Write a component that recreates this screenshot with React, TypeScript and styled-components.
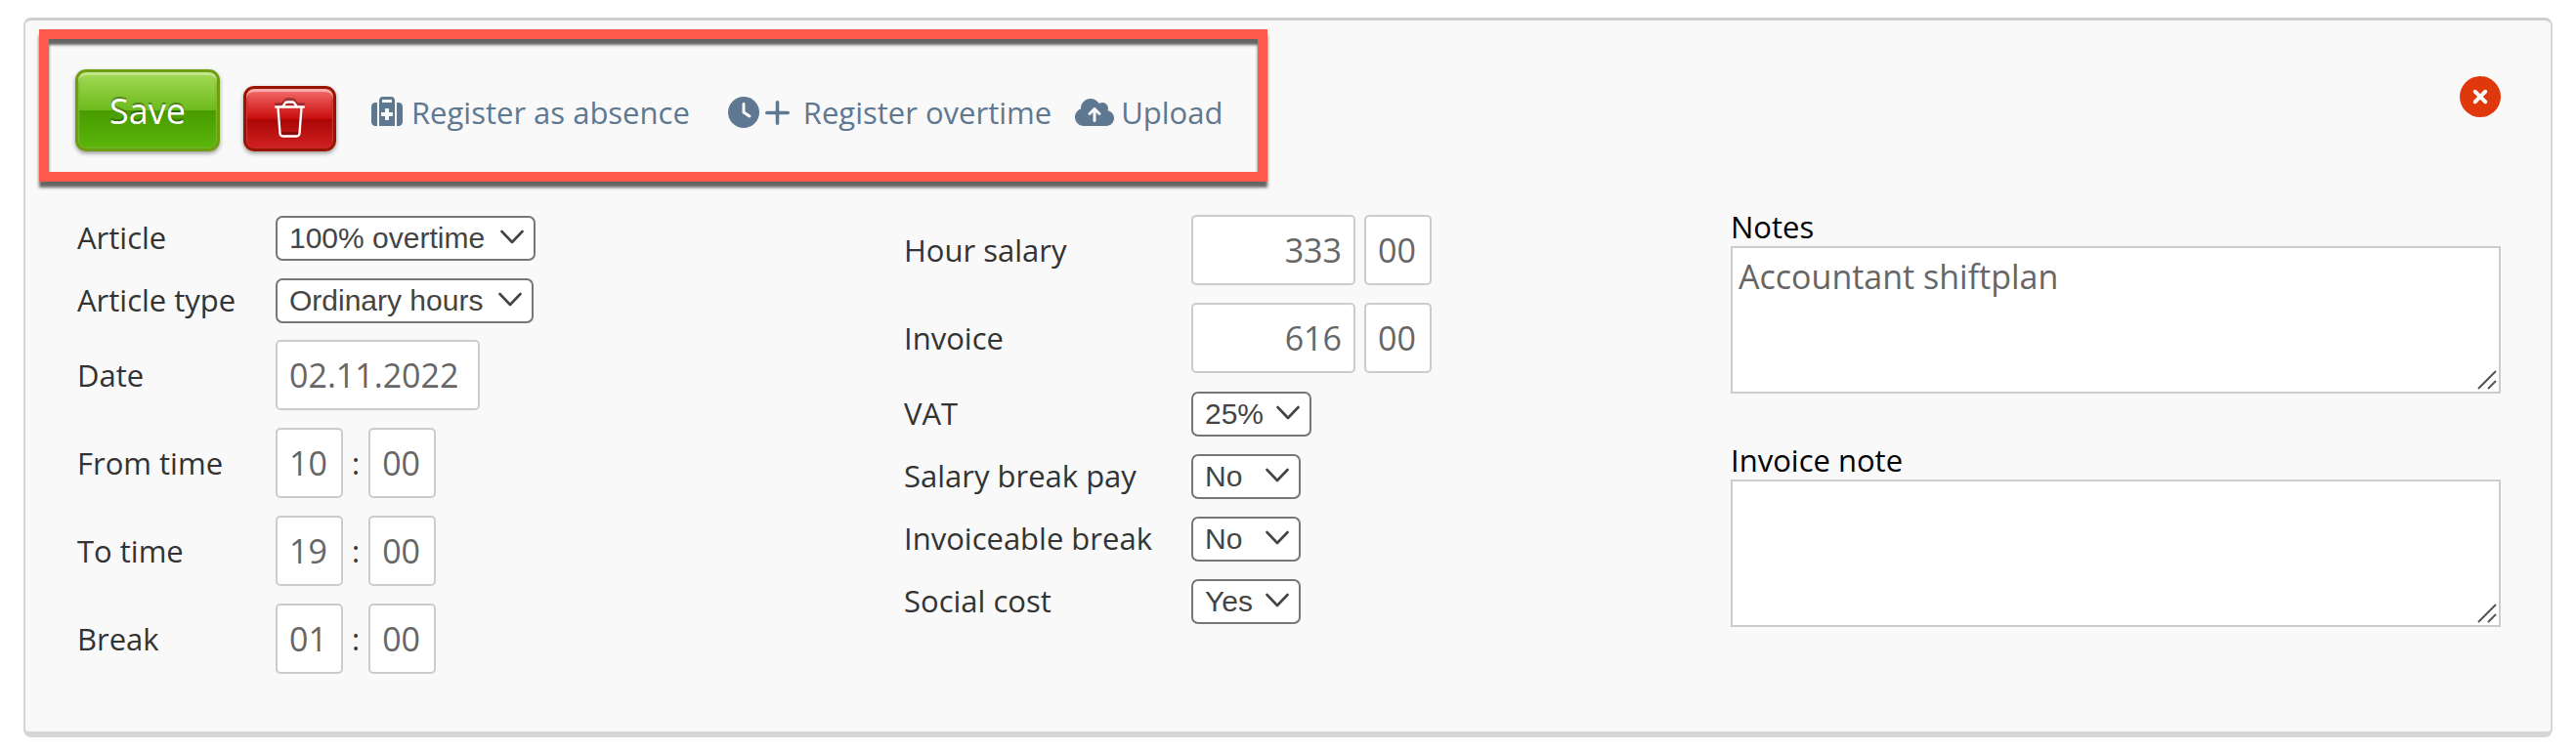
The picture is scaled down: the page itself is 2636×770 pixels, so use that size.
import React from 'react';
import styled, { createGlobalStyle } from 'styled-components';
import { FaSuitcaseMedical, FaClock, FaCloudArrowUp, FaCircleXmark } from 'react-icons/fa6';

const GlobalStyle = createGlobalStyle`
  *, *::before, *::after { box-sizing: border-box; }
  body {
    margin: 0;
    background: #fff;
    color: #333;
    font-family: 'Open Sans', 'Noto Sans', sans-serif;
    font-size: 31px;
    line-height: 44px;
  }
`;

const Page = styled.main`
  padding: 18px 24px 16px;
`;

const Card = styled.form`
  background: #f9f9f9;
  border: 2px solid #d6d6d6;
  border-top: 3px solid #cecece;
  border-bottom: 6px solid #d6d6d6;
  border-radius: 8px;
  padding: 9px 14px 59px;
`;

const Header = styled.header`
  display: flex;
  justify-content: space-between;
  align-items: flex-start;
`;

const Toolbar = styled.div`
  display: flex;
  align-items: flex-end;
  height: 156px;
  padding: 0 36px 21px 27px;
  border: 10px solid #ff5a4c;
  box-shadow: 0 6px 3px rgba(0, 0, 0, 0.6), inset 0 6px 3px rgba(0, 0, 0, 0.6);
`;

const palettes = {
  green: {
    border: '#6f9d12',
    fill: 'linear-gradient(#a8dc5c 0%, #6dbb1c 50%, #489b00 50%, #5db80b 100%)',
    glow: '#c4e88e',
    edge: '#74b62b',
  },
  red: {
    border: '#991500',
    fill: 'linear-gradient(#f97777 0%, #c90d0d 50%, #a90505 50%, #d42424 100%)',
    glow: '#fbacac',
    edge: '#c62a2a',
  },
};

const GlossyButton = styled.button<{ $tone: 'green' | 'red' }>`
  display: flex;
  align-items: center;
  justify-content: center;
  padding: ${p => (p.$tone === 'green' ? '16px 32px 14px' : '12px 29px 11px')};
  border: 3px solid ${p => palettes[p.$tone].border};
  border-radius: 11px;
  background: ${p => palettes[p.$tone].fill};
  background-origin: border-box;
  box-shadow: inset 0 3px 1px ${p => palettes[p.$tone].glow}, inset 0 0 2px 1px ${p => palettes[p.$tone].edge},
    0 2px 4px rgba(0, 0, 0, 0.4);
  color: #fff;
  font: 36px/48px 'Open Sans', 'Noto Sans', sans-serif;
  text-shadow: 0 -2px 1px rgba(0, 0, 0, 0.35);
  cursor: pointer;

  svg {
    display: block;
    filter: drop-shadow(0 -3px 0 rgba(0, 0, 0, 0.3));
  }
`;

const ActionLink = styled.a<{ $start: number; $gap: number }>`
  display: flex;
  align-items: center;
  gap: ${p => p.$gap}px;
  margin-left: ${p => p.$start}px;
  color: #5e7892;
  text-decoration: none;
  white-space: nowrap;

  svg { flex: none; }
`;

const IconPair = styled.span`
  display: flex;
  align-items: center;
  gap: 6px;
`;

const UploadIcon = styled(FaCloudArrowUp)`
  width: 40px;
  height: 32px;
`;

const ToolButtons = styled.div`
  display: flex;
  align-items: flex-end;
  gap: 24px;
`;

const ToolLinks = styled.nav`
  display: flex;
  padding-bottom: 18px;
`;

const CloseButton = styled.button`
  margin: 48px 37px 0 0;
  padding: 0;
  border: 0;
  background: none;
  color: #df380d;
  cursor: pointer;

  svg { display: block; }
`;

const Columns = styled.div`
  display: grid;
  grid-template-columns: repeat(3, minmax(0, 1fr));
  column-gap: 58px;
  padding: 34px 37px 0 39px;
`;

const Fields = styled.div<{ $labels: number }>`
  display: grid;
  grid-template-columns: ${p => p.$labels}px 1fr;
  align-content: start;
  align-items: center;
  row-gap: 18px;
`;

const Controls = styled.div<{ $gap: number }>`
  display: flex;
  align-items: center;
  gap: ${p => p.$gap}px;
`;

const TextInput = styled.input<{ $width: number; $right?: boolean }>`
  width: ${p => p.$width}px;
  height: 72px;
  padding: 0 12px;
  border: 2px solid #ccc;
  border-radius: 5px;
  background: #fff;
  color: #666;
  font: 34px 'Open Sans', 'Noto Sans', sans-serif;
  text-align: ${p => (p.$right ? 'right' : 'left')};
`;

const SelectBox = styled.span<{ $width: number }>`
  position: relative;
  display: block;
  width: ${p => p.$width}px;
  height: 46px;

  select {
    appearance: none;
    width: 100%;
    height: 100%;
    padding: 0 12px;
    border: 2px solid #767676;
    border-radius: 7px;
    background: #fff;
    color: #444;
    font: 30px 'Liberation Sans', Arial, sans-serif;
  }

  svg {
    position: absolute;
    right: 12px;
    top: 15px;
    pointer-events: none;
  }
`;

const NotesColumn = styled.div`
  display: flex;
  flex-direction: column;
  gap: 48px;
  margin-top: -8px;
  color: #000;
`;

const NoteField = styled.div`
  position: relative;

  label { display: block; line-height: 40px; }

  textarea {
    display: block;
    width: 100%;
    height: 151px;
    padding: 6px;
    border: 2px solid #ccc;
    border-radius: 0;
    resize: none;
    color: #666;
    font: 34px/46px 'Open Sans', 'Noto Sans', sans-serif;
  }

  svg {
    position: absolute;
    right: 4px;
    bottom: 4px;
    pointer-events: none;
  }
`;

function TrashIcon() {
  return (
    <svg width="31" height="38" viewBox="0 0 31 38" fill="none" stroke="#fff" strokeWidth="2.4" strokeLinejoin="round" strokeLinecap="round">
      <path d="M1.2 6.5H29.8" />
      <path d="M8.5 6L10.5 2.8Q11.2 1.5 12.8 1.5H18.2Q19.8 1.5 20.5 2.8L22.5 6" />
      <path d="M3.5 7L5.5 33.5Q5.8 36.5 8.5 36.5H22.5Q25.2 36.5 25.5 33.5L27.5 7" />
    </svg>
  );
}

function PlusIcon() {
  return (
    <svg width="25" height="25" viewBox="0 0 25 25" fill="none" stroke="currentColor" strokeWidth="3.6" strokeLinecap="round">
      <path d="M1.8 12.5H23.2M12.5 1.8V23.2" />
    </svg>
  );
}

function Select({ id, width, value }: { id: string; width: number; value: string }) {
  return (
    <SelectBox $width={width}>
      <select id={id} defaultValue={value}>
        <option>{value}</option>
      </select>
      <svg width="24" height="16" viewBox="0 0 24 16" fill="none" stroke="#444" strokeWidth="2.6" strokeLinecap="round" strokeLinejoin="round">
        <path d="M1.5 2L12 13L22.5 2" />
      </svg>
    </SelectBox>
  );
}

function TimeRow({ id, label, hours, minutes }: { id: string; label: string; hours: string; minutes: string }) {
  return (
    <>
      <label htmlFor={id}>{label}</label>
      <Controls $gap={9}>
        <TextInput id={id} $width={69} defaultValue={hours} />
        <span>:</span>
        <TextInput aria-label={`${label} minutes`} $width={69} defaultValue={minutes} />
      </Controls>
    </>
  );
}

function MoneyRow({ id, label, amount, cents }: { id: string; label: string; amount: string; cents: string }) {
  return (
    <>
      <label htmlFor={id}>{label}</label>
      <Controls $gap={9}>
        <TextInput id={id} $width={168} $right defaultValue={amount} />
        <TextInput aria-label={`${label} decimals`} $width={69} defaultValue={cents} />
      </Controls>
    </>
  );
}

function SelectRow({ id, label, width, value }: { id: string; label: string; width: number; value: string }) {
  return (
    <>
      <label htmlFor={id}>{label}</label>
      <Select id={id} width={width} value={value} />
    </>
  );
}

function Note({ id, label, value }: { id: string; label: string; value?: string }) {
  return (
    <NoteField>
      <label htmlFor={id}>{label}</label>
      <textarea id={id} defaultValue={value} />
      <svg width="20" height="20" viewBox="0 0 20 20" stroke="#555" strokeWidth="2">
        <path d="M1 19L19 1M11 19L19 11" />
      </svg>
    </NoteField>
  );
}

export default function App() {
  return (
    <>
      <GlobalStyle />
      <Page>
        <Card onSubmit={e => e.preventDefault()}>
          <Header>
            <Toolbar>
              <ToolButtons>
                <GlossyButton type="submit" $tone="green">Save</GlossyButton>
                <GlossyButton type="button" $tone="red" aria-label="Delete">
                  <TrashIcon />
                </GlossyButton>
              </ToolButtons>
              <ToolLinks>
                <ActionLink href="#absence" $start={36} $gap={9}>
                  <FaSuitcaseMedical size={32} />
                  Register as absence
                </ActionLink>
                <ActionLink href="#overtime" $start={39} $gap={14}>
                  <IconPair>
                    <FaClock size={32} />
                    <PlusIcon />
                  </IconPair>
                  Register overtime
                </ActionLink>
                <ActionLink href="#upload" $start={24} $gap={7}>
                  <UploadIcon />
                  Upload
                </ActionLink>
              </ToolLinks>
            </Toolbar>
            <CloseButton type="button" aria-label="Close">
              <FaCircleXmark size={42} />
            </CloseButton>
          </Header>
          <Columns>
            <Fields $labels={203}>
              <SelectRow id="article" label="Article" width={266} value="100% overtime" />
              <SelectRow id="article-type" label="Article type" width={264} value="Ordinary hours" />
              <label htmlFor="date">Date</label>
              <TextInput id="date" $width={209} defaultValue="02.11.2022" />
              <TimeRow id="from" label="From time" hours="10" minutes="00" />
              <TimeRow id="to" label="To time" hours="19" minutes="00" />
              <TimeRow id="break" label="Break" hours="01" minutes="00" />
            </Fields>
            <Fields $labels={294}>
              <MoneyRow id="salary" label="Hour salary" amount="333" cents="00" />
              <MoneyRow id="invoice" label="Invoice" amount="616" cents="00" />
              <SelectRow id="vat" label="VAT" width={123} value="25%" />
              <SelectRow id="break-pay" label="Salary break pay" width={112} value="No" />
              <SelectRow id="invoiceable" label="Invoiceable break" width={112} value="No" />
              <SelectRow id="social" label="Social cost" width={112} value="Yes" />
            </Fields>
            <NotesColumn>
              <Note id="notes" label="Notes" value="Accountant shiftplan" />
              <Note id="invoice-note" label="Invoice note" />
            </NotesColumn>
          </Columns>
        </Card>
      </Page>
    </>
  );
}
